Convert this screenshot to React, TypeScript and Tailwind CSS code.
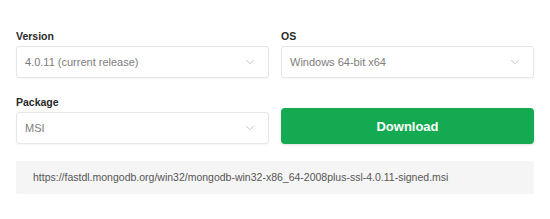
import { ChevronDown } from 'lucide-react';

const font = { fontFamily: '"Liberation Sans", Arial, sans-serif' };

function Select({ value }: { value: string }) {
  return (
    <div className="flex h-8 items-center justify-between rounded-[3px] border border-[#e6e6e6] bg-white pl-[8px] pr-[11px] shadow-[0_1px_2px_rgba(0,0,0,0.04)]">
      <span className="text-[11px] text-[#7d7d7d]">{value}</span>
      <ChevronDown className="h-[14px] w-[14px] text-[#b0b0b0]" strokeWidth={1.25} />
    </div>
  );
}

function Label({ children }: { children: string }) {
  return <div className="mb-[3px] h-[14px] text-[10.5px] font-bold leading-[14px] text-[#2a2a2a]">{children}</div>;
}

export default function App() {
  return (
    <div className="w-[550px] h-[219px] bg-white px-4 pt-[29px]" style={font}>
      <div className="grid grid-cols-2 gap-x-3">
        <div>
          <Label>Version</Label>
          <Select value="4.0.11 (current release)" />
        </div>
        <div>
          <Label>OS</Label>
          <Select value="Windows 64-bit x64" />
        </div>
        <div className="mt-[17px] flex flex-col justify-end">
          <Label>Package</Label>
          <Select value="MSI" />
        </div>
        <div className="mt-[17px] flex flex-col justify-end">
          <button className="h-9 rounded-[4px] bg-[#13aa52] pt-[1px] text-[13px] font-bold text-white shadow-[0_1px_3px_rgba(0,0,0,0.12)]">
            Download
          </button>
        </div>
      </div>
      <div className="mt-[17px] flex h-[33px] items-center rounded-[2px] bg-[#f5f5f5] px-[17px] text-[10.5px] text-[#555]">
        https://fastdl.mongodb.org/win32/mongodb-win32-x86_64-2008plus-ssl-4.0.11-signed.msi
      </div>
    </div>
  );
}
